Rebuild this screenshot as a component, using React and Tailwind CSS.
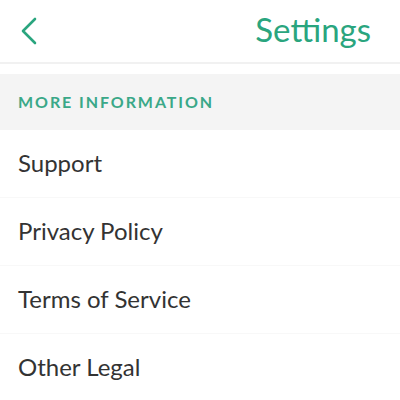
export default function App() {
    const items = ["Support", "Privacy Policy", "Terms of Service", "Other Legal"];

    return (
        <div className="w-[400px] h-[400px] overflow-hidden bg-white font-['Lato','Noto_Sans',sans-serif]">
            <div className="h-[62px] flex items-center justify-between pl-[19px] pr-[29px]">
                <svg width="20" height="30" viewBox="0 0 20 30" fill="none">
                    <path d="M16 3 L4 15 L16 27" stroke="#2aa57e" strokeWidth="2.6" strokeLinecap="round" strokeLinejoin="round" />
                </svg>
                <p className="text-[33px] text-[#2aa57e] leading-none mt-[-3px]">Settings</p>
            </div>
            <div className="h-[2px] bg-[#f1f1f1]"></div>
            <div className="h-[10px]"></div>
            <div className="h-[56px] bg-[#f4f4f4] flex items-center px-[18px]">
                <p className="text-[16px] font-bold tracking-[0.12em] text-[#3aa888]">MORE INFORMATION</p>
            </div>
            {items.map((item, index) => (
                <div key={index} className="h-[68px] flex items-center px-[18px] border-b border-[#f8f8f8]">
                    <p className="text-[24px] text-[#333333] mt-[-2px]">{item}</p>
                </div>
            ))}
        </div>
    );
}
